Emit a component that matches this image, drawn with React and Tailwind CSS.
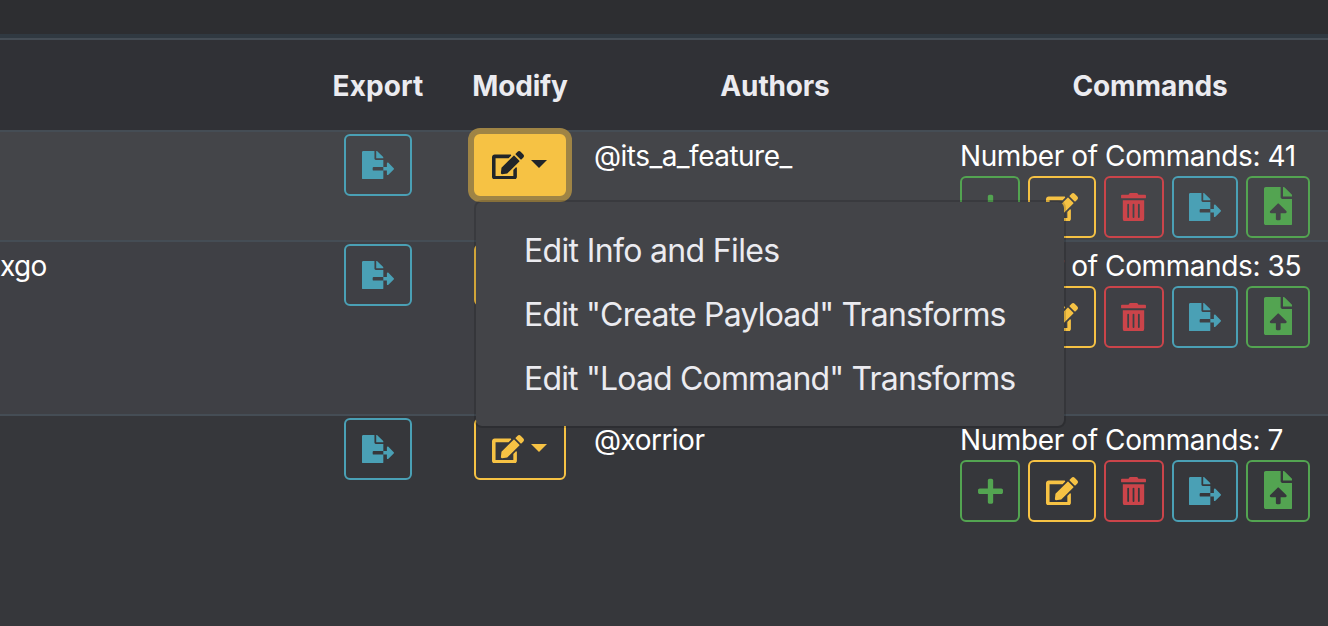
import React from "react";
import { FaFileExport, FaEdit, FaTrashAlt, FaPlus, FaFileUpload } from "react-icons/fa";

const COLS = "grid grid-cols-[308px_140px_144px_366px_384px] w-[1342px]";
const BTN = "flex h-[62px] items-center justify-center rounded-[6px] border-2";

function Caret() {
  return (
    <span className="mb-[2px] ml-[7px] h-0 w-0 border-x-[8.5px] border-t-[8.5px] border-x-transparent border-t-current" />
  );
}

function ExportButton({ width }) {
  return (
    <button className={`${BTN} ${width} border-[#4aa0b5] text-[#4aa0b5]`}>
      <FaFileExport className="h-[28.5px] w-[32px]" />
    </button>
  );
}

function ModifyMenu() {
  const items = [
    ["Edit Info and Files", "tracking-[-0.66px]"],
    ['Edit "Create Payload" Transforms', "tracking-[-0.81px]"],
    ['Edit "Load Command" Transforms', "tracking-[-0.83px]"],
  ];
  return (
    <ul className="absolute left-0 top-[66px] z-10 h-[228px] w-[592px] rounded-[8px] border-2 border-black/15 bg-[#434448] bg-clip-padding pb-[15px] pt-[17px]">
      {items.map(([label, tracking]) => (
        <li key={label} className="flex h-16 items-center whitespace-nowrap pl-12 text-[32px] leading-[48px] text-[#ebebf0]">
          <span className={tracking}>{label}</span>
        </li>
      ))}
    </ul>
  );
}

function ModifyButton({ open }) {
  const look = open
    ? "bg-[#f6c244] text-[#212529] shadow-[0_0_0_6px_#9f8445]"
    : "text-[#f6c244]";
  return (
    <div className="relative ml-[26px] w-[92px]">
      <button className={`${BTN} w-[92px] pr-px border-[#f6c244] ${look}`}>
        <FaEdit className="h-[28.5px] w-[32px]" />
        <Caret />
      </button>
      {open && <ModifyMenu />}
    </div>
  );
}

function Commands({ count }) {
  return (
    <div className="pl-[2px]">
      <p className="h-[42px] whitespace-nowrap leading-[44px] tracking-[-0.4px]">Number of Commands: {count}</p>
      <div className="flex gap-2">
        <button className={`${BTN} w-[60px] border-[#53a451] text-[#53a451]`}>
          <FaPlus className="h-[28.5px] w-[25px]" />
        </button>
        <button className={`${BTN} w-[68px] border-[#f6c244] text-[#f6c244]`}>
          <FaEdit className="h-[28.5px] w-[32px]" />
        </button>
        <button className={`${BTN} w-[60px] pr-px border-[#cb444a] text-[#cb444a]`}>
          <FaTrashAlt className="h-[28.5px] w-[25px]" />
        </button>
        <ExportButton width="w-[66px]" />
        <button className={`${BTN} w-[64px] border-[#53a451] text-[#53a451]`}>
          <FaFileUpload className="mb-[2px] h-[38px] w-[28.5px]" />
        </button>
      </div>
    </div>
  );
}

function Row({ name, author, count, open, className }) {
  return (
    <div className={`${COLS} border-t-2 border-[#454d55] pt-[2px] text-[28px] text-white ${className}`}>
      <div className="leading-[44px] tracking-[-0.7px]">{name}</div>
      <div className="pl-[36px]">
        <ExportButton width="w-[68px]" />
      </div>
      <ModifyButton open={open} />
      <div className="pl-[2px] leading-[44px] tracking-[-0.52px]">{author}</div>
      <Commands count={count} />
    </div>
  );
}

export default function App() {
  return (
    <div className="flex h-[626px] w-[1328px] flex-col overflow-hidden bg-[#36373b] font-['Inter',sans-serif] font-normal">
      <div className="h-[34px] shrink-0 bg-[#2d2e31]" />
      <div className="h-[4px] shrink-0 bg-[#303941]" />
      <div className={`${COLS} h-[92px] shrink-0 items-center border-t-2 border-[#454d55] bg-[#303136] pt-[2px] text-center text-[28px] font-bold text-[#ebebf0]`}>
        <span />
        <span className="tracking-[0.1px]">Export</span>
        <span className="tracking-[-0.2px]">Modify</span>
        <span className="tracking-[-0.15px]">Authors</span>
        <span className="tracking-[-0.1px]">Commands</span>
      </div>
      <Row className="h-[110px] shrink-0 bg-[#444549]" author="@its_a_feature_" count={41} open />
      <Row className="h-[174px] shrink-0 bg-[#3f4045]" name="xgo" count={35} />
      <Row className="grow bg-[#36373b]" author="@xorrior" count={7} />
    </div>
  );
}
